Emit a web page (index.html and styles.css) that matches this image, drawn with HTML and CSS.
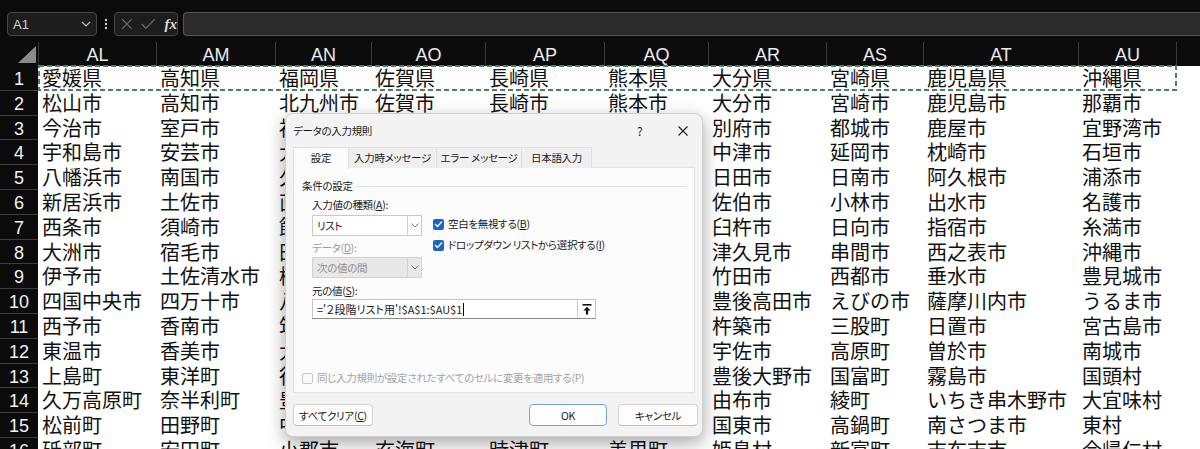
FILE: index.html
```html
<!DOCTYPE html>
<html lang="ja">
<head>
    <meta charset="UTF-8">
    <title>データの入力規則</title>
    <link rel="stylesheet" href="styles.css">
</head>
<body>
    <div class="toolbar">
        <div class="namebox">
            <span>A1</span>
            <svg width="10" height="6" viewBox="0 0 10 6"><polyline points="1,1 5,5 9,1" fill="none" stroke="#bdbdbd" stroke-width="1.2"/></svg>
        </div>
        <div class="dots">
            <svg width="4" height="12" viewBox="0 0 4 12"><circle cx="2" cy="2" r="1.2" fill="#cfcfcf"/><circle cx="2" cy="6" r="1.2" fill="#cfcfcf"/><circle cx="2" cy="10" r="1.2" fill="#cfcfcf"/></svg>
        </div>
        <div class="fbtns">
            <svg width="12" height="12" viewBox="0 0 12 12"><path d="M1 1 L11 11 M11 1 L1 11" stroke="#6c6c6c" stroke-width="1.3" fill="none"/></svg>
            <svg width="15" height="12" viewBox="0 0 15 12"><polyline points="1,6 5,10.5 14,1" fill="none" stroke="#6c6c6c" stroke-width="1.3"/></svg>
            <span class="fx">fx</span>
        </div>
        <div class="formula"></div>
    </div>

    <div class="sheet">
        <div class="corner"><svg width="38" height="24" viewBox="0 0 38 24"><polygon points="36,4 36,21 18,21" fill="#8a8a8a"/></svg></div>
        <div class="colhead">AL</div><div class="colhead">AM</div><div class="colhead">AN</div><div class="colhead">AO</div><div class="colhead">AP</div><div class="colhead">AQ</div><div class="colhead">AR</div><div class="colhead">AS</div><div class="colhead">AT</div><div class="colhead">AU</div><div class="colhead"></div>

        <div class="rowhead">1</div><div class="cell">愛媛県</div><div class="cell">高知県</div><div class="cell">福岡県</div><div class="cell">佐賀県</div><div class="cell">長崎県</div><div class="cell">熊本県</div><div class="cell">大分県</div><div class="cell">宮崎県</div><div class="cell">鹿児島県</div><div class="cell">沖縄県</div><div class="cell"></div>
        <div class="rowhead">2</div><div class="cell">松山市</div><div class="cell">高知市</div><div class="cell">北九州市</div><div class="cell">佐賀市</div><div class="cell">長崎市</div><div class="cell">熊本市</div><div class="cell">大分市</div><div class="cell">宮崎市</div><div class="cell">鹿児島市</div><div class="cell">那覇市</div><div class="cell"></div>
        <div class="rowhead">3</div><div class="cell">今治市</div><div class="cell">室戸市</div><div class="cell">福岡市</div><div class="cell">唐津市</div><div class="cell">佐世保市</div><div class="cell">八代市</div><div class="cell">別府市</div><div class="cell">都城市</div><div class="cell">鹿屋市</div><div class="cell">宜野湾市</div><div class="cell"></div>
        <div class="rowhead">4</div><div class="cell">宇和島市</div><div class="cell">安芸市</div><div class="cell">大牟田市</div><div class="cell">鳥栖市</div><div class="cell">島原市</div><div class="cell">人吉市</div><div class="cell">中津市</div><div class="cell">延岡市</div><div class="cell">枕崎市</div><div class="cell">石垣市</div><div class="cell"></div>
        <div class="rowhead">5</div><div class="cell">八幡浜市</div><div class="cell">南国市</div><div class="cell">久留米市</div><div class="cell">多久市</div><div class="cell">諫早市</div><div class="cell">荒尾市</div><div class="cell">日田市</div><div class="cell">日南市</div><div class="cell">阿久根市</div><div class="cell">浦添市</div><div class="cell"></div>
        <div class="rowhead">6</div><div class="cell">新居浜市</div><div class="cell">土佐市</div><div class="cell">直方市</div><div class="cell">伊万里市</div><div class="cell">大村市</div><div class="cell">水俣市</div><div class="cell">佐伯市</div><div class="cell">小林市</div><div class="cell">出水市</div><div class="cell">名護市</div><div class="cell"></div>
        <div class="rowhead">7</div><div class="cell">西条市</div><div class="cell">須崎市</div><div class="cell">飯塚市</div><div class="cell">武雄市</div><div class="cell">平戸市</div><div class="cell">玉名市</div><div class="cell">臼杵市</div><div class="cell">日向市</div><div class="cell">指宿市</div><div class="cell">糸満市</div><div class="cell"></div>
        <div class="rowhead">8</div><div class="cell">大洲市</div><div class="cell">宿毛市</div><div class="cell">田川市</div><div class="cell">鹿島市</div><div class="cell">松浦市</div><div class="cell">山鹿市</div><div class="cell">津久見市</div><div class="cell">串間市</div><div class="cell">西之表市</div><div class="cell">沖縄市</div><div class="cell"></div>
        <div class="rowhead">9</div><div class="cell">伊予市</div><div class="cell">土佐清水市</div><div class="cell">柳川市</div><div class="cell">小城市</div><div class="cell">対馬市</div><div class="cell">菊池市</div><div class="cell">竹田市</div><div class="cell">西都市</div><div class="cell">垂水市</div><div class="cell">豊見城市</div><div class="cell"></div>
        <div class="rowhead">10</div><div class="cell">四国中央市</div><div class="cell">四万十市</div><div class="cell">八女市</div><div class="cell">嬉野市</div><div class="cell">壱岐市</div><div class="cell">宇土市</div><div class="cell">豊後高田市</div><div class="cell">えびの市</div><div class="cell">薩摩川内市</div><div class="cell">うるま市</div><div class="cell"></div>
        <div class="rowhead">11</div><div class="cell">西予市</div><div class="cell">香南市</div><div class="cell">筑後市</div><div class="cell">神埼市</div><div class="cell">五島市</div><div class="cell">上天草市</div><div class="cell">杵築市</div><div class="cell">三股町</div><div class="cell">日置市</div><div class="cell">宮古島市</div><div class="cell"></div>
        <div class="rowhead">12</div><div class="cell">東温市</div><div class="cell">香美市</div><div class="cell">大川市</div><div class="cell">吉野ヶ里町</div><div class="cell">西海市</div><div class="cell">宇城市</div><div class="cell">宇佐市</div><div class="cell">高原町</div><div class="cell">曽於市</div><div class="cell">南城市</div><div class="cell"></div>
        <div class="rowhead">13</div><div class="cell">上島町</div><div class="cell">東洋町</div><div class="cell">行橋市</div><div class="cell">基山町</div><div class="cell">雲仙市</div><div class="cell">阿蘇市</div><div class="cell">豊後大野市</div><div class="cell">国富町</div><div class="cell">霧島市</div><div class="cell">国頭村</div><div class="cell"></div>
        <div class="rowhead">14</div><div class="cell">久万高原町</div><div class="cell">奈半利町</div><div class="cell">豊前市</div><div class="cell">上峰町</div><div class="cell">南島原市</div><div class="cell">天草市</div><div class="cell">由布市</div><div class="cell">綾町</div><div class="cell">いちき串木野市</div><div class="cell">大宜味村</div><div class="cell"></div>
        <div class="rowhead">15</div><div class="cell">松前町</div><div class="cell">田野町</div><div class="cell">中間市</div><div class="cell">みやき町</div><div class="cell">長与町</div><div class="cell">合志市</div><div class="cell">国東市</div><div class="cell">高鍋町</div><div class="cell">南さつま市</div><div class="cell">東村</div><div class="cell"></div>
        <div class="rowhead">16</div><div class="cell">砥部町</div><div class="cell">安田町</div><div class="cell">小郡市</div><div class="cell">玄海町</div><div class="cell">時津町</div><div class="cell">美里町</div><div class="cell">姫島村</div><div class="cell">新富町</div><div class="cell">志布志市</div><div class="cell">今帰仁村</div><div class="cell"></div>
    </div>

    <!-- コピー範囲の点線 -->
    <svg class="marquee" width="1140" height="26" viewBox="0 0 1140 26">
        <rect x="1" y="1" width="1137" height="24" fill="none" stroke="#4a8068" stroke-width="2" stroke-dasharray="5 3"/>
    </svg>

    <div class="dialog">
        <div class="dlg-title">
            <span class="dlg-name">データの入力規則</span>
            <span class="dlg-help">?</span>
            <svg class="dlg-close" width="10" height="10" viewBox="0 0 10 10"><path d="M0.5 0.5 L9.5 9.5 M9.5 0.5 L0.5 9.5" stroke="#1b1b1b" stroke-width="1.1" fill="none"/></svg>
        </div>

        <div class="tabs">
            <div class="tab active">設定</div>
            <div class="tab">入力時メッセージ</div>
            <div class="tab">エラー メッセージ</div>
            <div class="tab">日本語入力</div>
        </div>

        <div class="panel">
            <div class="legend"><span>条件の設定</span></div>

            <div class="criteria">
                <div class="criteria-left">
                    <div class="label">入力値の種類(<u>A</u>):</div>
                    <div class="select">
                        <span>リスト</span>
                        <span class="select-arrow"><svg width="8" height="5" viewBox="0 0 8 5"><polyline points="0.5,0.5 4,4 7.5,0.5" fill="none" stroke="#777" stroke-width="1"/></svg></span>
                    </div>
                    <div class="label disabled">データ(<u>D</u>):</div>
                    <div class="select disabled">
                        <span>次の値の間</span>
                        <span class="select-arrow"><svg width="8" height="5" viewBox="0 0 8 5"><polyline points="0.5,0.5 4,4 7.5,0.5" fill="none" stroke="#777" stroke-width="1"/></svg></span>
                    </div>
                </div>
                <div class="criteria-right">
                    <div class="check">
                        <span class="box on"><svg width="9" height="8" viewBox="0 0 9 8"><polyline points="1,4 3.5,6.5 8,1.5" fill="none" stroke="#fff" stroke-width="1.3"/></svg></span>
                        <span>空白を無視する(<u>B</u>)</span>
                    </div>
                    <div class="check">
                        <span class="box on"><svg width="9" height="8" viewBox="0 0 9 8"><polyline points="1,4 3.5,6.5 8,1.5" fill="none" stroke="#fff" stroke-width="1.3"/></svg></span>
                        <span>ドロップダウン リストから選択する(<u>I</u>)</span>
                    </div>
                </div>
            </div>

            <div class="label source-label">元の値(<u>S</u>):</div>
            <div class="source">
                <span class="source-text">='２段階リスト用'!$A$1:$AU$1</span><span class="caret"></span>
                <span class="source-pick"><svg width="10" height="11" viewBox="0 0 10 11"><rect x="0.5" y="0" width="9" height="1.6" fill="#111"/><path d="M5 2.8 L8.6 6.4 H6.1 V10.5 H3.9 V6.4 H1.4 Z" fill="#111"/></svg></span>
            </div>

            <div class="check apply-all">
                <span class="box off"></span>
                <span>同じ入力規則が設定されたすべてのセルに変更を適用する(P)</span>
            </div>
        </div>

        <div class="dlg-buttons">
            <button class="btn">すべてクリア(<u>C</u>)</button>
            <span class="spacer"></span>
            <button class="btn ok">OK</button>
            <button class="btn">キャンセル</button>
        </div>
    </div>
</body>
</html>
```

FILE: styles.css
```css
* {
    margin: 0;
    padding: 0;
    box-sizing: border-box;
}

body {
    width: 1200px;
    height: 449px;
    overflow: hidden;
    position: relative;
    background: #0b0b0b;
    font-family: "Liberation Sans", Arial, sans-serif;
}

/* 数式バー */
.toolbar {
    height: 42px;
    display: flex;
    padding: 12px 0 6px 7px;
}

.namebox {
    width: 90px;
    height: 24px;
    border: 1px solid #464646;
    border-radius: 4px;
    background: #1d1d1d;
    color: #d4d4d4;
    font-size: 13px;
    display: flex;
    align-items: center;
    justify-content: space-between;
    padding: 0 5px 0 5px;
}

.dots {
    width: 17px;
    display: flex;
    align-items: center;
    justify-content: center;
}

.fbtns {
    width: 64px;
    height: 24px;
    border: 1px solid #464646;
    border-radius: 4px;
    background: #1d1d1d;
    display: flex;
    align-items: center;
    gap: 8px;
    padding-left: 6px;
}

.fx {
    font-family: "Liberation Serif", serif;
    font-style: italic;
    font-weight: bold;
    font-size: 15px;
    color: #dcdcdc;
    margin-left: 1px;
}

.formula {
    flex: 1;
    height: 24px;
    margin-left: 5px;
    border: 1px solid #555;
    border-right: none;
    border-radius: 4px 0 0 4px;
    background: #2b2b2b;
}

/* シート */
.sheet {
    display: grid;
    grid-template-columns: 38px 118px 119px 96px 114px 119px 104px 118px 97px 155px 98px 1fr;
    grid-template-rows: 24px repeat(16, 24.8px);
}

.corner {
    background: #0b0b0b;
}

.colhead {
    background: #0b0b0b;
    color: #ececec;
    font-size: 18px;
    line-height: 21px;
    padding-top: 3px;
    text-align: center;
    border-left: 1px solid #3a3a3a;
}

.rowhead {
    background: #0b0b0b;
    color: #f2f2f2;
    font-size: 18px;
    line-height: 24px;
    padding-top: 1px;
    text-align: center;
    border-bottom: 1px solid #3e3e3e;
}

.cell {
    background: #fff;
    color: #111;
    font-family: "Noto Sans CJK JP", sans-serif;
    font-size: 20px;
    line-height: 24.8px;
    padding-left: 4px;
    white-space: nowrap;
}

.marquee {
    position: absolute;
    left: 38px;
    top: 65px;
}

/* 入力規則ダイアログ */
.dialog {
    position: absolute;
    left: 285px;
    top: 113px;
    width: 418px;
    height: 324px;
    background: #f3f3f3;
    border: 1px solid #cfcfcf;
    border-radius: 8px;
    box-shadow: 0 6px 18px rgba(0, 0, 0, 0.35);
    font-family: "Noto Sans CJK JP", sans-serif;
    font-feature-settings: "palt";
    font-size: 10.5px;
    letter-spacing: -0.3px;
    color: #1a1a1a;
    padding: 0 7px;
}

.dlg-title {
    height: 33px;
    display: flex;
    align-items: center;
}

.dlg-name {
    flex: 1;
}

.dlg-help {
    font-size: 12px;
    width: 10px;
    margin-right: 31px;
}

.dlg-close {
    margin-right: 7px;
}

.tabs {
    display: flex;
    height: 21px;
    position: relative;
    z-index: 1;
}

.tab {
    background: #efefef;
    border: 1px solid #e0e0e0;
    border-bottom: none;
    border-left: none;
    text-align: center;
    line-height: 20px;
}

.tab:nth-child(1) { width: 56px; }
.tab:nth-child(2) { width: 88px; }
.tab:nth-child(3) { width: 85px; }
.tab:nth-child(4) { width: 70px; }

.tab.active {
    background: #fcfcfc;
    border-left: 1px solid #e0e0e0;
    height: 22px;
}

.panel {
    width: 402px;
    height: 226px;
    margin-top: -1px;
    background: #fcfcfc;
    border: 1px solid #e2e2e2;
    padding: 0 7px 0 8px;
}

.legend {
    margin-top: 11px;
    height: 14px;
    line-height: 14px;
    display: flex;
    align-items: center;
    gap: 4px;
}

.legend::after {
    content: '';
    flex: 1;
    height: 1px;
    background: #e3e3e3;
}

.criteria {
    display: flex;
    gap: 11px;
    padding-left: 10px;
    margin-top: 5px;
}

.criteria-left {
    width: 110px;
}

.label {
    height: 14px;
    line-height: 14px;
}

.label.disabled {
    color: #9a9a9a;
    margin-top: 5px;
}

.select {
    height: 21px;
    margin-top: 3px;
    background: #fff;
    border: 1px solid #c9c9c9;
    display: flex;
    align-items: center;
    justify-content: space-between;
    padding-left: 4px;
}

.select.disabled {
    margin-top: 2px;
    background: #e8e8e8;
    border-color: #d2d2d2;
    color: #8f8f8f;
}

.select-arrow {
    width: 14px;
    height: 100%;
    border-left: 1px solid #d0d0d0;
    display: flex;
    align-items: center;
    justify-content: center;
}

.criteria-right {
    padding-top: 19px;
}

.check {
    display: flex;
    align-items: center;
    gap: 4px;
    height: 14px;
    line-height: 14px;
}

.check + .check {
    margin-top: 7px;
}

.box {
    width: 11px;
    height: 11px;
    border-radius: 2px;
    display: flex;
    align-items: center;
    justify-content: center;
}

.box.on {
    background: #1b63c5;
}

.box.off {
    border: 1px solid #c9c9c9;
    background: #f8f8f8;
}

.source-label {
    margin-top: 6px;
    padding-left: 10px;
}

.source {
    margin: 1px 0 0 10px;
    width: 284px;
    height: 20px;
    background: #fff;
    border: 1px solid #c4c4c4;
    border-bottom-color: #8a8a8a;
    display: flex;
    align-items: center;
    padding-left: 4px;
}

.source-text {
    white-space: nowrap;
    font-size: 11px;
    letter-spacing: 0;
}

.caret {
    width: 1px;
    height: 13px;
    background: #000;
    margin-left: 1px;
}

.source-pick {
    margin-left: auto;
    width: 18px;
    height: 100%;
    border-left: 1px solid #cfcfcf;
    display: flex;
    align-items: center;
    justify-content: center;
}

.apply-all {
    margin-top: 52px;
    color: #a3a3a3;
}

.dlg-buttons {
    display: flex;
    margin-top: 11px;
    margin-right: -3px;
    gap: 11px;
}

.spacer {
    flex: 1;
}

.btn {
    width: 80px;
    height: 22px;
    font: inherit;
    letter-spacing: inherit;
    color: #1a1a1a;
    background: #fdfdfd;
    border: 1px solid #d3d3d3;
    border-bottom-color: #bdbdbd;
    border-radius: 4px;
}

.btn.ok {
    width: 78px;
    border-color: #79a4d6;
}
```
